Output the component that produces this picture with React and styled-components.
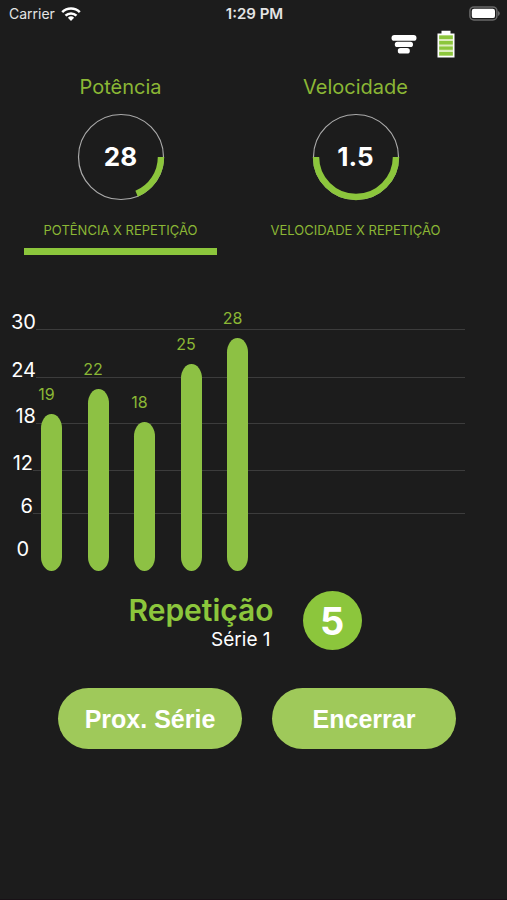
import React, { useState } from "react";
import styled, { createGlobalStyle } from "styled-components";

const color = {
  page: "#1c1c1c",
  green: "#8cc63c",
  bar: "#8dc144",
  text: "#8bb735",
  button: "#9fc95a",
  line: "#3c3c3c",
};

const GlobalStyle = createGlobalStyle`
  * { box-sizing: border-box; }
  body {
    margin: 0;
    background: ${color.page};
    color: #fff;
    font-family: Inter, "Liberation Sans", sans-serif;
  }
`;

const Screen = styled.div`
  display: flex;
  flex-direction: column;
  min-height: 100vh;
  background: ${color.page};
  border-bottom: 1px solid #181116;
`;

const StatusBar = styled.header`
  display: grid;
  grid-template-columns: 1fr auto 1fr;
  align-items: center;
  height: 28px;
  padding: 0 7px 0 9px;
  font-size: 14px;
  line-height: 20px;
  color: #e4e4e4;
`;

const Carrier = styled.div`
  display: flex;
  align-items: center;
  gap: 6px;
`;

const Clock = styled.time`
  font-size: 15px;
  font-weight: 600;
`;

const StatusBattery = styled.svg`
  justify-self: end;
`;

const Toolbar = styled.div`
  display: flex;
  justify-content: flex-end;
  align-items: center;
  gap: 20px;
  height: 32px;
  padding-right: 52px;
`;

const Metrics = styled.main`
  display: grid;
  grid-template-columns: 1fr 1fr;
  column-gap: 42px;
  padding: 14px 55px 0 24px;
`;

const Metric = styled.section`
  display: flex;
  flex-direction: column;
  align-items: center;
`;

const MetricTitle = styled.h2`
  margin: 0 0 13px;
  font-size: 20px;
  line-height: 26px;
  font-weight: 400;
  color: ${color.text};
`;

const Dial = styled.div`
  display: grid;
  place-items: center;
  > * { grid-area: 1 / 1; }
`;

const DialValue = styled.span`
  font-size: 26px;
  line-height: 32px;
  font-weight: 700;
`;

const Tab = styled.button`
  width: 100%;
  margin-top: 17px;
  padding: 0 0 6px;
  border: 0;
  border-bottom: 7px solid ${(p) => (p.$active ? color.green : "transparent")};
  background: none;
  color: ${color.text};
  font: 400 13px/24px Inter, sans-serif;
  white-space: nowrap;
  cursor: pointer;
`;

const Chart = styled.section`
  display: grid;
  margin: 51px 42px 0 0;
  > * { grid-area: 1 / 1; }
`;

const Scale = styled.div`
  display: flex;
  flex-direction: column;
`;

const ScaleRow = styled.div`
  display: flex;
  align-items: flex-end;
  height: ${(p) => p.$height}px;
`;

const ScaleLabel = styled.span`
  width: ${(p) => p.$width}px;
  text-align: right;
  font-size: 20px;
  line-height: 16px;
`;

const GridLine = styled.span`
  flex: 1;
  height: 1px;
  background: ${color.line};
`;

const Bars = styled.div`
  display: flex;
  align-items: flex-end;
  justify-content: space-between;
  width: 221px;
  margin: 2px 0 0 34px;
`;

const BarColumn = styled.div`
  display: flex;
  flex-direction: column;
  align-items: flex-end;
  width: 35px;
`;

const BarLabel = styled.span`
  width: 100%;
  padding-right: 10px;
  text-align: center;
  font-size: 16px;
  line-height: 20px;
  color: ${color.text};
`;

const Bar = styled.span`
  width: 21px;
  margin: 10px 7px 0;
  border-radius: 11px / 15px;
  background: ${color.bar};
`;

const Summary = styled.section`
  display: flex;
  justify-content: center;
  align-items: center;
  gap: 29px;
  margin-top: 18px;
  padding-right: 17px;
`;

const SummaryText = styled.div`
  padding-top: 4px;
  text-align: right;
`;

const SummaryTitle = styled.h1`
  margin: 0;
  font-size: 30px;
  line-height: 34px;
  font-weight: 600;
  color: ${color.green};
`;

const Series = styled.p`
  margin: 0;
  padding-right: 3px;
  font-size: 19px;
  line-height: 25px;
`;

const CountBadge = styled.output`
  display: grid;
  place-items: center;
  width: 59px;
  height: 59px;
  border-radius: 50%;
  background: ${color.green};
  font-size: 38px;
  line-height: 40px;
  font-weight: 700;
`;

const Actions = styled.footer`
  display: grid;
  grid-template-columns: 1fr 1fr;
  gap: 30px;
  padding: 36px 51px 0 58px;
`;

const ActionButton = styled.button`
  height: 61px;
  padding: 0;
  border: 0;
  border-radius: 31px;
  background: ${color.button};
  color: #fff;
  font: 700 25px/30px "Liberation Sans", sans-serif;
  white-space: nowrap;
  cursor: pointer;
`;

const metrics = [
  { id: "power", title: "Potência", value: "28", tab: "POTÊNCIA X REPETIÇÃO", sweep: 67 },
  { id: "speed", title: "Velocidade", value: "1.5", tab: "VELOCIDADE X REPETIÇÃO", sweep: 180 },
];

const scale = [
  { value: 30, height: 24, width: 36 },
  { value: 24, height: 48, width: 36 },
  { value: 18, height: 46, width: 36 },
  { value: 12, height: 47, width: 33 },
  { value: 6, height: 43, width: 33 },
];

const bars = [
  { value: 19, height: 157 },
  { value: 22, height: 182 },
  { value: 18, height: 149 },
  { value: 25, height: 207 },
  { value: 28, height: 233 },
];

function Ring({ sweep }) {
  const angle = (sweep * Math.PI) / 180;
  const x = 44 + 40 * Math.cos(angle);
  const y = 44 + 40 * Math.sin(angle);
  return (
    <svg width="88" height="88" viewBox="0 0 88 88" fill="none" aria-hidden="true">
      <circle cx="44" cy="44" r="42.5" stroke="#aaa" strokeWidth="1.2" />
      <path d={`M84 44 A40 40 0 0 1 ${x} ${y}`} stroke={color.green} strokeWidth="6.4" />
    </svg>
  );
}

function WifiIcon() {
  return (
    <svg width="20" height="15" viewBox="0 0 20 15" fill="none" stroke="#fff" strokeWidth="2.5" aria-hidden="true">
      <path d="M1.2 5.2 A12.5 12.5 0 0 1 18.8 5.2" />
      <path d="M4.5 8.7 A7.8 7.8 0 0 1 15.5 8.7" />
      <path d="M10 14 L6.9 10.8 A4.5 4.5 0 0 1 13.1 10.8 Z" fill="#fff" stroke="none" />
    </svg>
  );
}

export default function App() {
  const [active, setActive] = useState("power");
  return (
    <>
      <GlobalStyle />
      <Screen>
        <StatusBar>
          <Carrier>
            Carrier
            <WifiIcon />
          </Carrier>
          <Clock>1:29 PM</Clock>
          <StatusBattery width="31" height="16" viewBox="0 0 31 16" aria-hidden="true">
            <rect x="0.9" y="0.9" width="27" height="13" rx="4" fill="none" stroke="#686868" strokeWidth="1.5" />
            <rect x="2.8" y="2.7" width="23.2" height="9.4" rx="2.2" fill="#fff" />
            <path d="M29 5 Q30.8 5.8 30.8 7.5 Q30.8 9.2 29 10 Z" fill="#686868" />
          </StatusBattery>
        </StatusBar>

        <Toolbar>
          <svg width="26" height="20" viewBox="0 0 26 20" fill="#fff" aria-hidden="true">
            <rect x="0.5" y="1" width="25" height="5.8" rx="2.9" />
            <rect x="3.8" y="7.8" width="18.2" height="5.2" rx="2.6" />
            <rect x="6.8" y="14" width="12" height="5.6" rx="2.7" />
          </svg>
          <svg width="18" height="28" viewBox="0 0 18 28" aria-hidden="true">
            <path d="M4.5 0.8 H13.5 V3.4 H17.5 V27.4 H0.5 V3.4 H4.5 Z" fill="#fff" />
            <path d="M2 5 H16 V26 H2 Z" fill="#dcedbd" />
            <path d="M2.2 5.4 H15.8 V8.9 H2.2 Z M2.2 11 H15.8 V14.4 H2.2 Z M2.2 16.4 H15.8 V19.8 H2.2 Z M2.2 22 H15.8 V25.6 H2.2 Z" fill={color.green} />
          </svg>
        </Toolbar>

        <Metrics>
          {metrics.map((m) => (
            <Metric key={m.id}>
              <MetricTitle>{m.title}</MetricTitle>
              <Dial>
                <Ring sweep={m.sweep} />
                <DialValue>{m.value}</DialValue>
              </Dial>
              <Tab
                type="button"
                $active={active === m.id}
                aria-pressed={active === m.id}
                onClick={() => setActive(m.id)}
              >
                {m.tab}
              </Tab>
            </Metric>
          ))}
        </Metrics>

        <Chart>
          <Scale>
            {scale.map((s) => (
              <ScaleRow key={s.value} $height={s.height}>
                <ScaleLabel $width={s.width}>{s.value}</ScaleLabel>
                <GridLine />
              </ScaleRow>
            ))}
            <ScaleRow $height={43}>
              <ScaleLabel $width={29}>0</ScaleLabel>
            </ScaleRow>
          </Scale>
          <Bars>
            {bars.map((b) => (
              <BarColumn key={b.value}>
                <BarLabel>{b.value}</BarLabel>
                <Bar style={{ height: b.height }} />
              </BarColumn>
            ))}
          </Bars>
        </Chart>

        <Summary>
          <SummaryText>
            <SummaryTitle>Repetição</SummaryTitle>
            <Series>Série 1</Series>
          </SummaryText>
          <CountBadge>5</CountBadge>
        </Summary>

        <Actions>
          <ActionButton type="button">Prox. Série</ActionButton>
          <ActionButton type="button">Encerrar</ActionButton>
        </Actions>
      </Screen>
    </>
  );
}
